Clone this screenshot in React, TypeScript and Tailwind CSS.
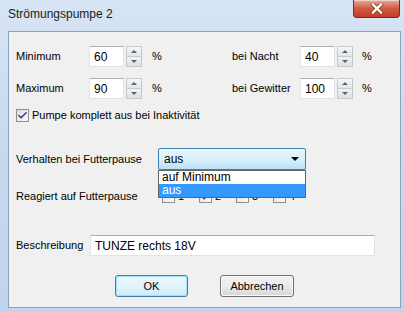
import { Check } from "lucide-react";

const font = "font-['Liberation_Sans',Arial,sans-serif]";

function Spinner() {
  return (
    <div className="flex h-[21px] w-[16px] flex-col border border-[#c5c9d0] bg-white">
      <div className="flex flex-1 items-center justify-center border-b border-[#c5c9d0] bg-gradient-to-b from-[#f7f7f7] to-[#e4e4e4]">
        <div className="h-0 w-0 border-x-[3px] border-b-[3px] border-x-transparent border-b-[#55647a]" />
      </div>
      <div className="flex flex-1 items-center justify-center bg-gradient-to-b from-[#f2f2f2] to-[#e0e0e0]">
        <div className="h-0 w-0 border-x-[3px] border-t-[3px] border-x-transparent border-t-[#55647a]" />
      </div>
    </div>
  );
}

function NumField({ value, width }: { value: string; width: string }) {
  return (
    <div className="flex items-center gap-[2px]">
      <div
        className={`flex h-[21px] ${width} items-center border border-[#e2e3ea] border-t-[#abadb3] bg-white pl-[4px] text-[12px] text-black`}
      >
        {value}
      </div>
      <Spinner />
    </div>
  );
}

function SmallBox({ checked }: { checked?: boolean }) {
  return (
    <div className="flex h-[13px] w-[13px] shrink-0 items-center justify-center border border-[#8f8f8f] bg-gradient-to-br from-[#dcdcdc] to-[#fbfbfb]">
      {checked && <Check className="h-[11px] w-[11px] text-[#34468a]" strokeWidth={3.5} />}
    </div>
  );
}

export default function App() {
  return (
    <div
      className={`relative flex h-[312px] w-[404px] flex-col overflow-hidden bg-gradient-to-b from-[#d7e4f4] via-[#c6d9ef] to-[#c0d4ec] ${font}`}
    >
      {/* Titelleiste */}
      <div className="flex h-[31px] shrink-0 items-center pl-[8px] pb-[4px] text-[12px] text-[#1b1b1b]">
        Strömungspumpe 2
      </div>
      <div className="absolute right-[4px] top-0 flex h-[18px] w-[47px] items-center justify-center rounded-b-[4px] border border-t-0 border-[#7a2d22] bg-gradient-to-b from-[#e9a99b] via-[#cf5a43] to-[#c23d25] shadow-[inset_0_1px_0_rgba(255,255,255,0.5)]">
        <svg width="14" height="11" viewBox="0 0 14 11">
          <path d="M3 1.5 L11 9.5 M11 1.5 L3 9.5" stroke="#5a1a10" strokeWidth="4" strokeLinecap="square" opacity="0.5" />
          <path d="M3 1.5 L11 9.5 M11 1.5 L3 9.5" stroke="#ffffff" strokeWidth="2.4" strokeLinecap="square" />
        </svg>
      </div>

      {/* Client */}
      <div className="ml-[8px] h-[277px] w-[393px] shrink-0 border border-[#8ea3bb] bg-[#f0f0f0] text-[11px] text-black">
        <div className="relative flex flex-col pl-[7px] pt-[14px]">
          {/* Minimum / bei Nacht */}
          <div className="flex h-[21px] items-center">
            <div className="flex w-[216px] items-center">
              <span className="w-[73px]">Minimum</span>
              <NumField value="60" width="w-[35px]" />
              <span className="ml-[10px]">%</span>
            </div>
            <span className="w-[68px]">bei Nacht</span>
            <NumField value="40" width="w-[35px]" />
            <span className="ml-[9px]">%</span>
          </div>

          {/* Maximum / bei Gewitter */}
          <div className="mt-[11px] flex h-[21px] items-center">
            <div className="flex w-[216px] items-center">
              <span className="w-[73px]">Maximum</span>
              <NumField value="90" width="w-[35px]" />
              <span className="ml-[10px]">%</span>
            </div>
            <span className="w-[68px]">bei Gewitter</span>
            <NumField value="100" width="w-[35px]" />
            <span className="ml-[9px]">%</span>
          </div>

          {/* Checkbox */}
          <div className="mt-[10px] flex h-[13px] items-center gap-[3px]">
            <SmallBox checked />
            <span>Pumpe komplett aus bei Inaktivität</span>
          </div>

          {/* Verhalten */}
          <div className="mt-[26px] flex h-[22px] items-center">
            <span className="w-[142px]">Verhalten bei Futterpause</span>
            <div className="flex h-[22px] w-[148px] items-center justify-between rounded-[2px] border border-[#3c7fb1] bg-gradient-to-b from-[#eaf6fd] via-[#d9f0fc] to-[#b9e0f6] pl-[5px] pr-[6px] text-[12px]">
              <span>aus</span>
              <div className="h-0 w-0 border-x-[4px] border-t-[4px] border-x-transparent border-t-black" />
            </div>
          </div>

          {/* Reagiert */}
          <div className="mt-[20px] flex h-[13px] items-center">
            <span className="w-[146px]">Reagiert auf Futterpause</span>
            {["1", "2", "3", "4"].map((n, i) => (
              <div key={n} className="flex w-[37px] items-center gap-[3px]">
                <SmallBox checked={i === 1} />
                <span>{n}</span>
              </div>
            ))}
          </div>

          {/* Dropdown-Liste */}
          <div className="absolute left-[149px] top-[138px] w-[148px] border border-[#646464] bg-white text-[12px]">
            <div className="h-[13px] pl-[3px] leading-[13px]">auf Minimum</div>
            <div className="h-[13px] bg-[#3399ff] pl-[3px] leading-[13px] text-white">aus</div>
          </div>

          {/* Beschreibung */}
          <div className="mt-[32px] flex h-[21px] items-center">
            <span className="w-[74px]">Beschreibung</span>
            <div className="flex h-[21px] w-[285px] items-center border border-[#e2e3ea] border-t-[#abadb3] bg-white pl-[4px] text-[12px]">
              TUNZE rechts 18V
            </div>
          </div>

          {/* Buttons */}
          <div className="mt-[19px] flex items-center pl-[99px]">
            <button className="flex h-[22px] w-[73px] items-center justify-center rounded-[3px] border border-[#3c7fb1] bg-gradient-to-b from-[#eaf6fd] via-[#e4f2fb] to-[#cde9f8] shadow-[inset_0_0_0_1px_#a6e0f8]">
              OK
            </button>
            <button className="ml-[32px] flex h-[22px] w-[74px] items-center justify-center rounded-[3px] border border-[#707070] bg-gradient-to-b from-[#f2f2f2] via-[#ebebeb] to-[#d6d6d6] shadow-[inset_0_0_0_1px_#fcfcfc]">
              Abbrechen
            </button>
          </div>
        </div>
      </div>
    </div>
  );
}
